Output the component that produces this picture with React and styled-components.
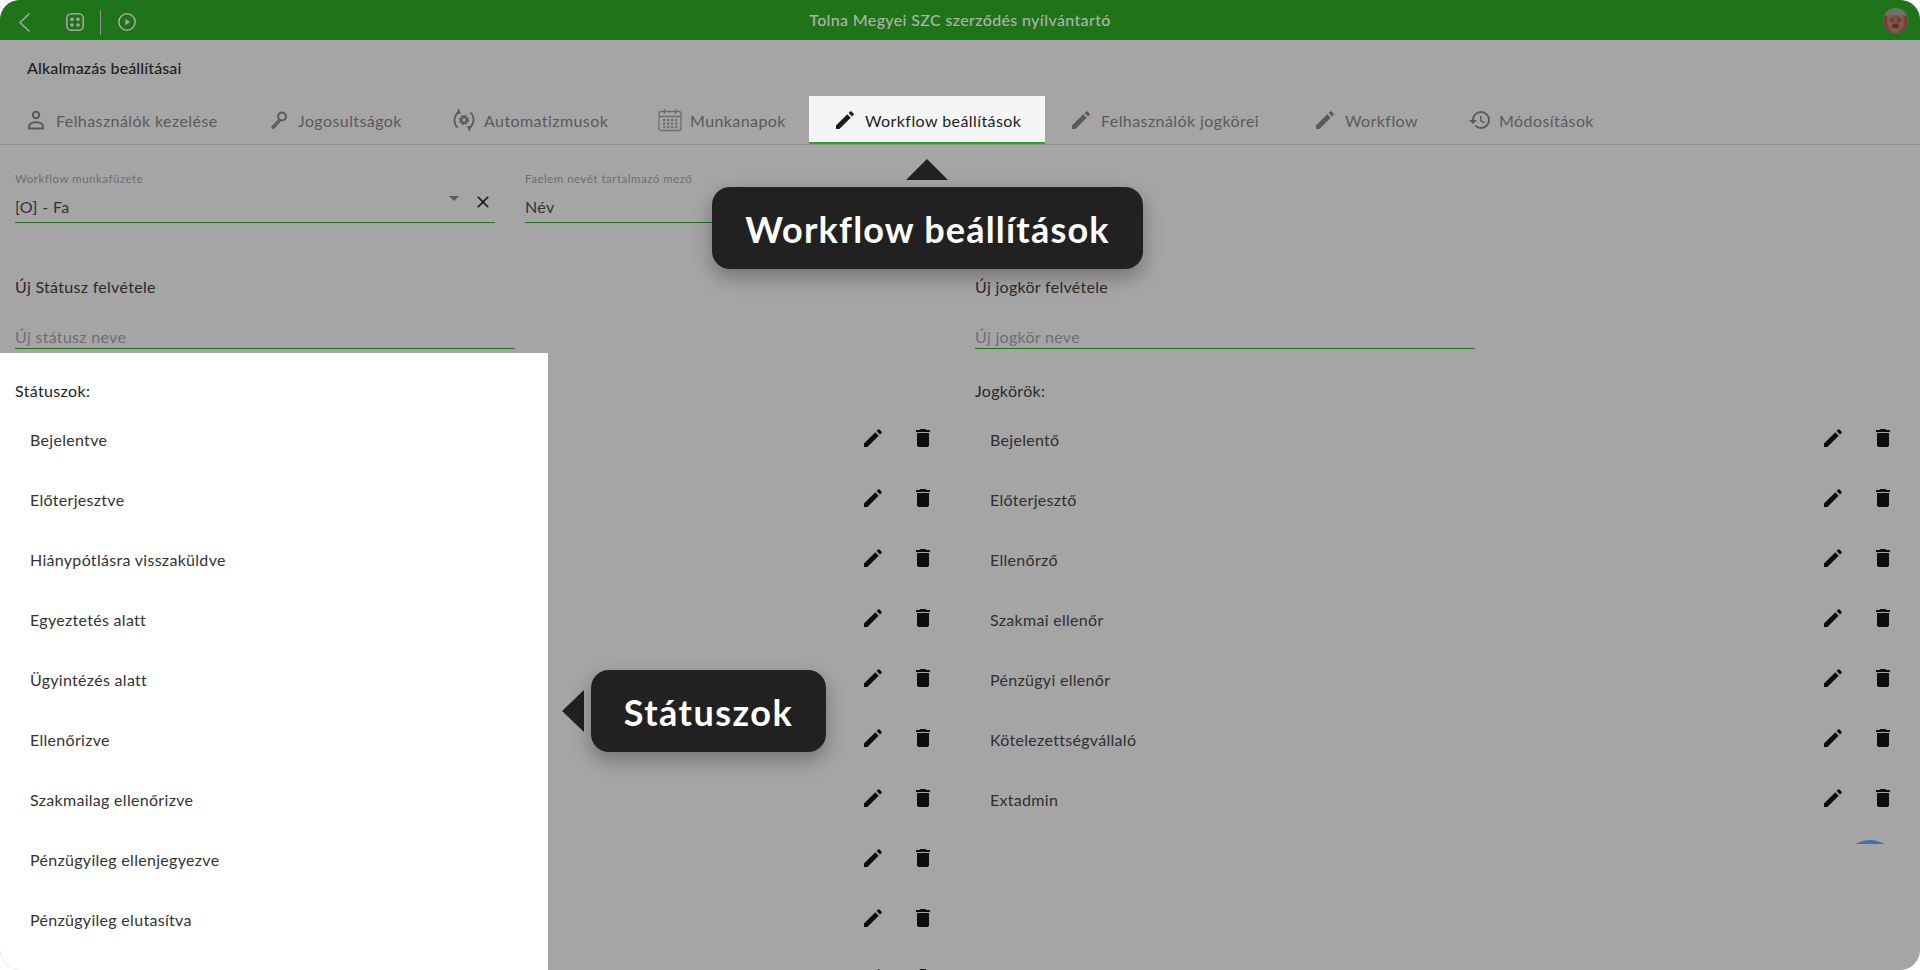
import React from "react";
import styled, { createGlobalStyle } from "styled-components";
import { MdDelete, MdHistory, MdClose } from "react-icons/md";

const GlobalStyle = createGlobalStyle`
  html, body {
    margin: 0;
    padding: 0;
    height: 100%;
    background: #fff;
    overflow: hidden;
  }
  #root {
    height: 100%;
  }
`;

const Page = styled.div`
  position: relative;
  width: 1920px;
  height: 970px;
  display: flex;
  flex-direction: column;
  overflow: hidden;
  border-radius: 20px;
  background: #a5a5a5;
  font-family: Lato, "Noto Sans", sans-serif;
  color: #2a2a2a;
`;

const TopBar = styled.header`
  position: relative;
  flex: none;
  height: 40px;
  display: flex;
  align-items: center;
  justify-content: space-between;
  padding: 0 12px 0 15px;
  background: #1f7319;
`;

const BarTools = styled.div`
  display: flex;
  align-items: center;
  gap: 15px;
  padding-top: 4px;
  color: #a6a6a6;
`;

const BackButton = styled.span`
  display: flex;
  margin-right: 15px;
`;

const PlayButton = styled.span`
  display: flex;
  margin-left: 1px;
`;

const BarTitle = styled.div`
  position: absolute;
  left: 0;
  right: 0;
  padding-bottom: 1px;
  text-align: center;
  font-size: 16px;
  font-weight: 500;
  letter-spacing: 0.35px;
  color: #abb5a8;
`;

const Separator = styled.span`
  width: 1px;
  height: 25px;
  background: #8d9a89;
`;

const PageTitle = styled.h1`
  margin: 0;
  padding: 19px 27px 0;
  height: 56px;
  box-sizing: border-box;
  font-size: 16px;
  line-height: 18px;
  font-weight: 500;
  letter-spacing: 0.12px;
  color: #1e1e1e;
`;

const TabBar = styled.nav`
  display: flex;
  height: 48px;
  box-sizing: content-box;
  border-bottom: 1px solid #909090;
`;

const Tab = styled.div`
  width: ${(p) => p.$w}px;
  flex: none;
  box-sizing: border-box;
  display: flex;
  align-items: center;
  gap: ${(p) => p.$gap || 8}px;
  padding: 2px 0 0 24px;
  font-size: 16px;
  letter-spacing: 0.42px;
  white-space: nowrap;
  color: ${(p) => (p.$active ? "#1c1c1c" : "#5a5a5a")};
  background: ${(p) => (p.$active ? "#f5f5f5" : "transparent")};
  border-bottom: ${(p) => (p.$active ? "2px solid #22a81c" : "2px solid transparent")};
  svg {
    flex: none;
  }
`;

const FieldRow = styled.div`
  display: flex;
  gap: 30px;
  padding: 27px 15px 0;
`;

const Field = styled.div`
  position: relative;
  width: 480px;
  height: 51px;
  box-sizing: border-box;
  border-bottom: 1px solid #1f7319;
`;

const FieldLabel = styled.label`
  display: block;
  font-size: 11.5px;
  line-height: 14px;
  letter-spacing: 0.5px;
  color: #6e6e6e;
`;

const FieldValue = styled.div`
  margin-top: 12px;
  font-size: 16px;
  line-height: 18px;
  letter-spacing: 0.35px;
  color: #333;
`;

const FieldArrow = styled.span`
  position: absolute;
  right: 36px;
  top: 24px;
  width: 0;
  height: 0;
  border-left: 5px solid transparent;
  border-right: 5px solid transparent;
  border-top: 5px solid #5c5c5c;
`;

const ClearIcon = styled(MdClose)`
  position: absolute;
  right: 2px;
  top: 20px;
  color: #1c1c1c;
`;

const Columns = styled.main`
  flex: 1;
  min-height: 0;
  display: grid;
  grid-template-columns: 935px 945px;
  column-gap: 40px;
  margin-top: 55px;
`;

const Column = styled.section`
  display: flex;
  flex-direction: column;
  padding-left: ${(p) => (p.$first ? 15 : 0)}px;
  padding-right: ${(p) => (p.$first ? 0 : 25)}px;
`;

const NewTitle = styled.div`
  font-size: 16px;
  line-height: 18px;
  letter-spacing: 0.3px;
  color: #2a2a2a;
`;

const NewInput = styled.div`
  width: 500px;
  height: 32px;
  margin-top: 21px;
  margin-bottom: 4px;
  box-sizing: border-box;
  font-size: 16px;
  line-height: 18px;
  padding-top: 11px;
  letter-spacing: 0.3px;
  color: #6f6f6f;
  border-bottom: 1px solid #1f7319;
`;

const ListArea = styled.div`
  flex: 1;
  min-height: 0;
  margin-left: ${(p) => (p.$spot ? -15 : 0)}px;
  padding-left: ${(p) => (p.$spot ? 15 : 0)}px;
  padding-top: 29px;
  background: ${(p) =>
    p.$spot ? "linear-gradient(to right, #fff 548px, transparent 548px)" : "transparent"};
`;

const ListTitle = styled.div`
  font-size: 16px;
  line-height: 18px;
  letter-spacing: 0.35px;
  height: 26px;
  color: ${(p) => (p.$spot ? "#222" : "#2a2a2a")};
`;

const Row = styled.div`
  height: 60px;
  display: flex;
  align-items: center;
  padding-left: 15px;
  font-size: 16px;
  letter-spacing: 0.3px;
  color: ${(p) => (p.$spot ? "#333" : "#2f2f2f")};
`;

const RowText = styled.span`
  flex: 1;
  padding-top: 3px;
`;

const RowActions = styled.div`
  display: flex;
  gap: 26px;
  color: #0d0d0d;
`;

const Tooltip = styled.div`
  position: absolute;
  left: ${(p) => p.$x}px;
  top: ${(p) => p.$y}px;
  width: ${(p) => p.$w}px;
  height: 82px;
  display: flex;
  align-items: center;
  justify-content: center;
  padding-top: 1px;
  box-sizing: border-box;
  border-radius: 18px;
  background: #212121;
  color: #fff;
  font-size: 36px;
  font-weight: 700;
  letter-spacing: ${(p) => p.$ls}px;
  box-shadow: 0 8px 20px rgba(0, 0, 0, 0.3);
`;

const ArrowUp = styled.span`
  position: absolute;
  left: 906px;
  top: 159px;
  width: 0;
  height: 0;
  border-left: 21px solid transparent;
  border-right: 21px solid transparent;
  border-bottom: 21px solid #212121;
`;

const ArrowLeft = styled.span`
  position: absolute;
  left: 562px;
  top: 690px;
  width: 0;
  height: 0;
  border-top: 21px solid transparent;
  border-bottom: 21px solid transparent;
  border-right: 22px solid #212121;
`;

const FabPeek = styled.div`
  position: absolute;
  left: 1842px;
  top: 840px;
  width: 56px;
  height: 4px;
  overflow: hidden;
  &::before {
    content: "";
    display: block;
    width: 56px;
    height: 56px;
    border-radius: 50%;
    background: #4472a8;
  }
`;

const BackIcon = () => (
  <svg width="20" height="24" viewBox="0 0 20 24" fill="none" stroke="currentColor" strokeWidth="1.7" strokeLinecap="round" strokeLinejoin="round">
    <path d="M14 4 L5 12.5 L14 21" />
  </svg>
);

const AppsIcon = () => (
  <svg width="20" height="20" viewBox="0 0 20 20" fill="none" stroke="currentColor" strokeWidth="1.6">
    <rect x="1.8" y="1.8" width="16.4" height="16.4" rx="4.5" />
    <g fill="currentColor" stroke="none">
      <circle cx="7" cy="7.2" r="1.8" />
      <circle cx="13" cy="7.2" r="1.8" />
      <circle cx="7" cy="13" r="1.8" />
      <circle cx="13" cy="13" r="1.8" />
    </g>
  </svg>
);

const PlayCircleIcon = () => (
  <svg width="20" height="20" viewBox="0 0 20 20" fill="none" stroke="currentColor" strokeWidth="1.6">
    <circle cx="10" cy="10" r="8.2" />
    <path d="M8.3 6.8 L13 10 L8.3 13.2 Z" fill="currentColor" stroke="none" />
  </svg>
);

const Avatar = () => (
  <svg width="25" height="25" viewBox="0 0 25 25">
    <defs>
      <clipPath id="avatarClip">
        <circle cx="12.5" cy="12.5" r="12.5" />
      </clipPath>
      <filter id="avatarBlur">
        <feGaussianBlur stdDeviation="1" />
      </filter>
    </defs>
    <g clipPath="url(#avatarClip)">
      <rect width="25" height="25" fill="#74706d" />
      <g filter="url(#avatarBlur)">
        <rect y="8" width="25" height="17" fill="#6b3d32" />
        <path d="M5 6 L9 10 H16 L20 6 L21 18 L16 24 H9 L4 18 Z" fill="#8c5d4c" />
        <rect x="7" y="11" width="4" height="3" fill="#42261f" />
        <rect x="14" y="11" width="4" height="3" fill="#42261f" />
        <rect x="9" y="16" width="7" height="4" fill="#3a211c" />
      </g>
    </g>
  </svg>
);

const PencilIcon = () => (
  <svg width="24" height="24" viewBox="0 0 24 24" fill="currentColor">
    <path d="M3 21 V17.6 L14.3 6.3 L17.7 9.7 L6.4 21 Z" />
    <path d="M15.6 5 L17.1 3.5 a1 1 0 0 1 1.4 0 L20.5 5.5 a1 1 0 0 1 0 1.4 L19 8.4 Z" />
  </svg>
);

const PersonIcon = () => (
  <svg width="24" height="24" viewBox="0 0 24 24" fill="none" stroke="currentColor" strokeWidth="2">
    <circle cx="12" cy="7" r="3.2" />
    <path d="M5 20.5 v-1.9 c0-2.8 3.2-4.4 7-4.4 s7 1.6 7 4.4 v1.9 Z" />
  </svg>
);

const KeyIcon = () => (
  <svg width="24" height="24" viewBox="0 0 24 24" fill="none" stroke="currentColor" strokeWidth="2" strokeLinejoin="round">
    <circle cx="16" cy="8.5" r="3.9" />
    <path d="M13.2 11.5 L6 19 L7.3 20.3 L14.2 13" strokeWidth="1.7" />
  </svg>
);

const AutomationIcon = () => (
  <svg width="24" height="24" viewBox="0 0 24 24" fill="none" stroke="currentColor" strokeWidth="1.8" strokeLinecap="round">
    <path d="M5 19 A10 10 0 0 1 7 4" />
    <path d="M19 5 A10 10 0 0 1 17 20" />
    <path d="M6.5 1.5 L8 5 L4.5 5.5" strokeWidth="1.4" fill="currentColor" />
    <path d="M17.5 22.5 L16 19 L19.5 18.5" strokeWidth="1.4" fill="currentColor" />
    <circle cx="12" cy="12" r="4" strokeWidth="2" strokeDasharray="2.1 1.04" strokeLinecap="butt" />
    <circle cx="12" cy="12" r="2.6" strokeWidth="1.8" />
  </svg>
);

const CalendarIcon = () => (
  <svg width="24" height="24" viewBox="0 0 24 24" fill="none" stroke="#6e6e6e" strokeWidth="1.3">
    <rect x="1" y="3.5" width="22" height="19" rx="2" />
    <path d="M1 8.5 H23 M6.5 1 V6 M17.5 1 V6" />
    <g fill="#6e6e6e" stroke="none">
      {[11, 14.5, 18].map((y) =>
        [5, 9, 13, 17].map((x) => <rect key={`${x}-${y}`} x={x} y={y} width="2.4" height="2.2" />)
      )}
    </g>
  </svg>
);

const tabs = [
  { label: "Felhasználók kezelése", w: 242, icon: <PersonIcon /> },
  { label: "Jogosultságok", w: 186, icon: <KeyIcon /> },
  { label: "Automatizmusok", w: 206, icon: <AutomationIcon /> },
  { label: "Munkanapok", w: 175, icon: <CalendarIcon /> },
  { label: "Workflow beállítások", w: 236, icon: <PencilIcon />, active: true },
  { label: "Felhasználók jogkörei", w: 244, icon: <PencilIcon /> },
  { label: "Workflow", w: 155, icon: <PencilIcon /> },
  { label: "Módosítások", w: 180, icon: <MdHistory size={24} />, gap: 7 },
];

const statuses = [
  "Bejelentve",
  "Előterjesztve",
  "Hiánypótlásra visszaküldve",
  "Egyeztetés alatt",
  "Ügyintézés alatt",
  "Ellenőrizve",
  "Szakmailag ellenőrizve",
  "Pénzügyileg ellenjegyezve",
  "Pénzügyileg elutasítva",
  "",
];

const roles = [
  "Bejelentő",
  "Előterjesztő",
  "Ellenőrző",
  "Szakmai ellenőr",
  "Pénzügyi ellenőr",
  "Kötelezettségvállaló",
  "Extadmin",
];

const ListRow = ({ label, spot }) => (
  <Row $spot={spot}>
    <RowText>{label}</RowText>
    <RowActions>
      <PencilIcon />
      <MdDelete size={24} />
    </RowActions>
  </Row>
);

export default function App() {
  return (
    <>
      <GlobalStyle />
      <Page>
        <TopBar>
          <BarTools>
            <BackButton>
              <BackIcon />
            </BackButton>
            <AppsIcon />
            <Separator />
            <PlayButton>
              <PlayCircleIcon />
            </PlayButton>
          </BarTools>
          <BarTitle>Tolna Megyei SZC szerződés nyílvántartó</BarTitle>
          <Avatar />
        </TopBar>

        <PageTitle>Alkalmazás beállításai</PageTitle>

        <TabBar>
          {tabs.map((t) => (
            <Tab key={t.label} $w={t.w} $active={t.active} $gap={t.gap}>
              {t.icon}
              {t.label}
            </Tab>
          ))}
        </TabBar>

        <FieldRow>
          <Field>
            <FieldLabel>Workflow munkafüzete</FieldLabel>
            <FieldValue>[O] - Fa</FieldValue>
            <FieldArrow />
            <ClearIcon size={20} />
          </Field>
          <Field>
            <FieldLabel>Faelem nevét tartalmazó mező</FieldLabel>
            <FieldValue>Név</FieldValue>
          </Field>
        </FieldRow>

        <Columns>
          <Column $first>
            <NewTitle>Új Státusz felvétele</NewTitle>
            <NewInput>Új státusz neve</NewInput>
            <ListArea $spot>
              <ListTitle $spot>Státuszok:</ListTitle>
              {statuses.map((s, i) => (
                <ListRow key={i} label={s} spot />
              ))}
            </ListArea>
          </Column>
          <Column>
            <NewTitle>Új jogkör felvétele</NewTitle>
            <NewInput>Új jogkör neve</NewInput>
            <ListArea>
              <ListTitle>Jogkörök:</ListTitle>
              {roles.map((r) => (
                <ListRow key={r} label={r} />
              ))}
            </ListArea>
          </Column>
        </Columns>

        <ArrowUp />
        <Tooltip $x={712} $y={187} $w={431} $ls={1.2}>
          Workflow beállítások
        </Tooltip>
        <ArrowLeft />
        <Tooltip $x={591} $y={670} $w={235} $ls={1.5}>
          Státuszok
        </Tooltip>
        <FabPeek />
      </Page>
    </>
  );
}
